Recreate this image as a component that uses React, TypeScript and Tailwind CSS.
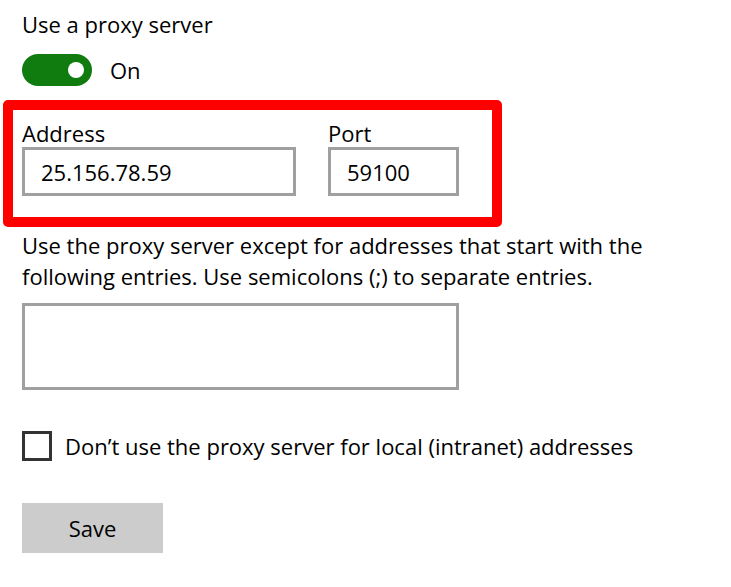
import React, { useState } from 'react';

const ProxySettings: React.FC = () => {
    const [enabled, setEnabled] = useState(true);
    const [address, setAddress] = useState('25.156.78.59');
    const [port, setPort] = useState('59100');
    const [exceptions, setExceptions] = useState('');
    const [bypassLocal, setBypassLocal] = useState(false);

    return (
        <div className="min-h-screen bg-white pl-[22px] pt-[10px] text-black font-['Open_Sans','Noto_Sans',sans-serif] text-[22px] leading-[28px]">
            <div>Use a proxy server</div>

            {/* toggle */}
            <div className="mt-[16px] flex items-center gap-[18px]">
                <button
                    onClick={() => setEnabled(!enabled)}
                    className={`flex h-[32px] w-[70px] items-center rounded-full px-[8px] ${enabled ? 'justify-end bg-[#107c10]' : 'justify-start border-[3px] border-black bg-white'}`}
                >
                    <span className={`h-[16px] w-[16px] rounded-full ${enabled ? 'bg-white' : 'bg-black'}`} />
                </button>
                <span>{enabled ? 'On' : 'Off'}</span>
            </div>

            {/* highlighted address / port */}
            <div className="-ml-[19px] mt-[14px] flex h-[127px] w-[499px] gap-[32px] rounded-[5px] border-[10px] border-[#ff0000] pl-[9px] pt-[9px]">
                <div className="flex flex-col">
                    <label htmlFor="proxy-address">Address</label>
                    <input
                        id="proxy-address"
                        value={address}
                        onChange={e => setAddress(e.target.value)}
                        className="h-[49px] w-[274px] border-[3px] border-[#a0a0a0] px-[16px] outline-none"
                    />
                </div>
                <div className="flex flex-col">
                    <label htmlFor="proxy-port">Port</label>
                    <input
                        id="proxy-port"
                        value={port}
                        onChange={e => setPort(e.target.value)}
                        className="h-[49px] w-[131px] border-[3px] border-[#a0a0a0] px-[16px] outline-none"
                    />
                </div>
            </div>

            <p className="mt-[3px] w-[650px] leading-[31px]">
                Use the proxy server except for addresses that start with the following entries. Use semicolons (;) to separate entries.
            </p>
            <textarea
                value={exceptions}
                onChange={e => setExceptions(e.target.value)}
                className="mt-[11px] block h-[87px] w-[437px] resize-none border-[3px] border-[#a0a0a0] px-[10px] outline-none"
            />

            <label className="mt-[41px] flex items-center gap-[13px]">
                <input
                    type="checkbox"
                    checked={bypassLocal}
                    onChange={e => setBypassLocal(e.target.checked)}
                    className="h-[30px] w-[30px] appearance-none border-[3px] border-[#333333] bg-white checked:bg-[#107c10]"
                />
                <span>Don’t use the proxy server for local (intranet) addresses</span>
            </label>

            <button className="mt-[42px] block h-[50px] w-[141px] bg-[#cccccc]">Save</button>
        </div>
    );
};

export default function App() {
    return <ProxySettings />;
}
